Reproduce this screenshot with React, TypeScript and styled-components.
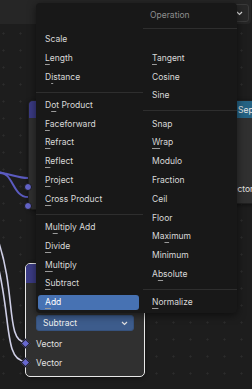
import React from "react";
import styled, { createGlobalStyle } from "styled-components";

const Global = createGlobalStyle`
  html, body {
    margin: 0;
    padding: 0;
    background: #1d1d1d;
  }
`;

const FONT = `Inter, "DejaVu Sans", "Noto Sans", sans-serif`;

const Canvas = styled.div`
  position: relative;
  width: 252px;
  height: 389px;
  overflow: hidden;
  background-color: #1d1d1d;
  background-image: radial-gradient(circle, #2c2c2c 0.8px, transparent 1.3px);
  background-size: 17px 17px;
  background-position: -5px 8px;
  font-family: ${FONT};
  font-size: 8.5px;
  color: #dcdcdc;
`;

const Wires = styled.svg`
  position: absolute;
  left: 0;
  top: 0;
`;

/* nodes sit on the free canvas, so they are placed by coordinates */
const Node = styled.div<{ $x: number; $y: number; $w: number; $h: number; $selected?: boolean }>`
  position: absolute;
  left: ${(p) => p.$x}px;
  top: ${(p) => p.$y}px;
  width: ${(p) => p.$w}px;
  height: ${(p) => p.$h}px;
  box-sizing: border-box;
  display: flex;
  flex-direction: column;
  background: #303030;
  border-radius: 5px;
  border: 1px solid ${(p) => (p.$selected ? "#e8e8e8" : "#202020")};
  box-shadow: 0 1px 4px rgba(0, 0, 0, 0.45);
`;

const NodeHeader = styled.div<{ $color: string; $h: number }>`
  height: ${(p) => p.$h}px;
  flex: none;
  display: flex;
  align-items: center;
  padding-left: 21px;
  background: ${(p) => p.$color};
  border-radius: 4px 4px 0 0;
  color: #e6e6e6;
`;

const NodeBody = styled.div<{ $pad: string }>`
  display: flex;
  flex-direction: column;
  padding: ${(p) => p.$pad};
`;

const SocketRow = styled.div<{ $h?: number }>`
  position: relative;
  height: ${(p) => p.$h ?? 19}px;
  display: flex;
  align-items: center;
  padding: 0 10px;
  color: #e2e2e2;
`;

const CircleSocket = styled.span`
  position: absolute;
  left: -5px;
  top: 5.5px;
  width: 6px;
  height: 6px;
  border-radius: 50%;
  background: #6363c7;
  border: 1px solid #1a1a1a;
`;

const DiamondSocket = styled.span`
  position: absolute;
  left: -4px;
  top: 6px;
  width: 5px;
  height: 5px;
  transform: rotate(45deg);
  background: #6767cf;
  border: 1px solid #202020;
`;

const Field = styled.div<{ $active?: boolean }>`
  height: 16px;
  box-sizing: border-box;
  display: flex;
  align-items: center;
  justify-content: space-between;
  padding: 0 5px 0 6px;
  border-radius: 3px;
  background: ${(p) => (p.$active ? "#3d5c8c" : "#282828")};
  border: 1px solid ${(p) => (p.$active ? "#36527d" : "#3a3a3a")};
  color: #f0f0f0;
`;

const TopStrip = styled.div`
  position: absolute;
  left: -10px;
  top: -30px;
  width: 261px;
  height: 54px;
  box-sizing: border-box;
  display: flex;
  align-items: flex-end;
  padding: 0 2px 2px 60px;
  background: #262626;
  border-radius: 0 0 4px 4px;
  & > div {
    flex: 1;
    height: 18px;
  }
`;

const Menu = styled.div`
  position: absolute;
  left: 36px;
  top: 3px;
  width: 201px;
  height: 310px;
  display: flex;
  background: #181818;
  border-radius: 4px;
  box-shadow: 0 2px 8px rgba(0, 0, 0, 0.55);
  color: #d9d9d9;
`;

const Column = styled.div<{ $w: number }>`
  width: ${(p) => p.$w}px;
  display: flex;
  flex-direction: column;
`;

const Header = styled.div<{ $line?: boolean }>`
  height: 26px;
  box-sizing: border-box;
  margin-bottom: 2px;
  padding: 6px 0 0 7px;
  line-height: 12px;
  border-bottom: 1px solid ${(p) => (p.$line ? "#2e2e2e" : "transparent")};
  color: #8e8e8e;
`;

const Item = styled.div`
  height: 18.8px;
  box-sizing: border-box;
  padding: 1px 4px 3px 2px;
`;

const Label = styled.div<{ $active?: boolean }>`
  height: 14.8px;
  line-height: 14.8px;
  padding-left: 7px;
  border-radius: 3px;
  white-space: nowrap;
  background: ${(p) => (p.$active ? "#4772b3" : "transparent")};
  color: ${(p) => (p.$active ? "#ffffff" : "inherit")};
`;

const Key = styled.span`
  text-decoration: underline;
  text-decoration-color: #9a9a9a;
  text-decoration-thickness: 1px;
  text-underline-offset: 2.5px;
`;

const Separator = styled.div`
  height: 9.4px;
  display: flex;
  align-items: center;
  &::before {
    content: "";
    flex: 1;
    height: 1px;
    background: #2e2e2e;
  }
`;

const Chevron = () => (
  <svg width="7" height="5" viewBox="0 0 7 5">
    <path d="M1 1 L3.5 3.5 L6 1" fill="none" stroke="#e0e0e0" strokeWidth="1.2" />
  </svg>
);

type Entry = { text: string; key: number; active?: boolean } | "sep" | "blank";

const left: Entry[] = [
  { text: "Scale", key: -1 },
  { text: "Length", key: 0 },
  { text: "Distance", key: 1 },
  "sep",
  { text: "Dot Product", key: 1 },
  { text: "Faceforward", key: 0 },
  { text: "Refract", key: 0 },
  { text: "Reflect", key: 0 },
  { text: "Project", key: 0 },
  { text: "Cross Product", key: 0 },
  "sep",
  { text: "Multiply Add", key: 1 },
  { text: "Divide", key: 0 },
  { text: "Multiply", key: 0 },
  { text: "Subtract", key: 0 },
  { text: "Add", key: 0, active: true },
];

const right: Entry[] = [
  "blank",
  { text: "Tangent", key: 0 },
  { text: "Cosine", key: -1 },
  { text: "Sine", key: -1 },
  "sep",
  { text: "Snap", key: -1 },
  { text: "Wrap", key: 0 },
  { text: "Modulo", key: -1 },
  { text: "Fraction", key: -1 },
  { text: "Ceil", key: -1 },
  { text: "Floor", key: -1 },
  { text: "Maximum", key: 2 },
  { text: "Minimum", key: -1 },
  { text: "Absolute", key: 1 },
  "sep",
  { text: "Normalize", key: 0 },
];

const renderEntries = (list: Entry[]) =>
  list.map((e, i) => {
    if (e === "sep") return <Separator key={i} />;
    if (e === "blank") return <Item key={i} />;
    const { text, key, active } = e;
    return (
      <Item key={i}>
        <Label $active={active}>
          {key < 0 ? (
            text
          ) : (
            <>
              {text.slice(0, key)}
              <Key>{text[key]}</Key>
              {text.slice(key + 1)}
            </>
          )}
        </Label>
      </Item>
    );
  });

export default function App() {
  return (
    <Canvas>
      <Global />
      <TopStrip>
        <Field>
          <span />
          <Chevron />
        </Field>
      </TopStrip>

      <Wires width="252" height="389">
        <g fill="none" strokeLinecap="round">
          <path d="M-2 173 C 10 173, 16 178, 28 178" stroke="#5b5bc0" strokeWidth="2" />
          <path d="M-2 172 C 14 172, 12 197, 28 197" stroke="#5b5bc0" strokeWidth="2" />
          <path d="M-2 240 C 16 292, 6 342, 25 342" stroke="#cfcfe6" strokeWidth="1.6" />
          <path d="M-5 254 C 12 312, 3 361, 25 361" stroke="#cfcfe6" strokeWidth="1.6" />
        </g>
      </Wires>

      {/* node mostly covered by the menu: only its edge and input sockets show */}
      <Node $x={28} $y={100} $w={130} $h={110}>
        <NodeHeader $color="#3b3b85" $h={17} />
        <NodeBody $pad="59px 0 0">
          <SocketRow>
            <CircleSocket />
          </SocketRow>
          <SocketRow>
            <CircleSocket />
          </SocketRow>
        </NodeBody>
      </Node>

      <Node $x={216} $y={100} $w={140} $h={104}>
        <NodeHeader $color="#246283" $h={17}>Separate XYZ</NodeHeader>
        <NodeBody $pad="61px 0 0">
          <SocketRow>Vector</SocketRow>
        </NodeBody>
      </Node>

      <Node $x={25} $y={263} $w={120} $h={114} $selected>
        <NodeHeader $color="#3c3c86" $h={19} />
        <NodeBody $pad="32px 10px 6px">
          <Field $active>
            Subtract
            <Chevron />
          </Field>
        </NodeBody>
        <NodeBody $pad="0">
          <SocketRow style={{ marginTop: -3 }}>
            <DiamondSocket />
            Vector
          </SocketRow>
          <SocketRow>
            <DiamondSocket />
            Vector
          </SocketRow>
        </NodeBody>
      </Node>

      <Menu>
        <Column $w={107}>
          <Header />
          {renderEntries(left)}
        </Column>
        <Column $w={94}>
          <Header $line>Operation</Header>
          {renderEntries(right)}
        </Column>
      </Menu>
    </Canvas>
  );
}
